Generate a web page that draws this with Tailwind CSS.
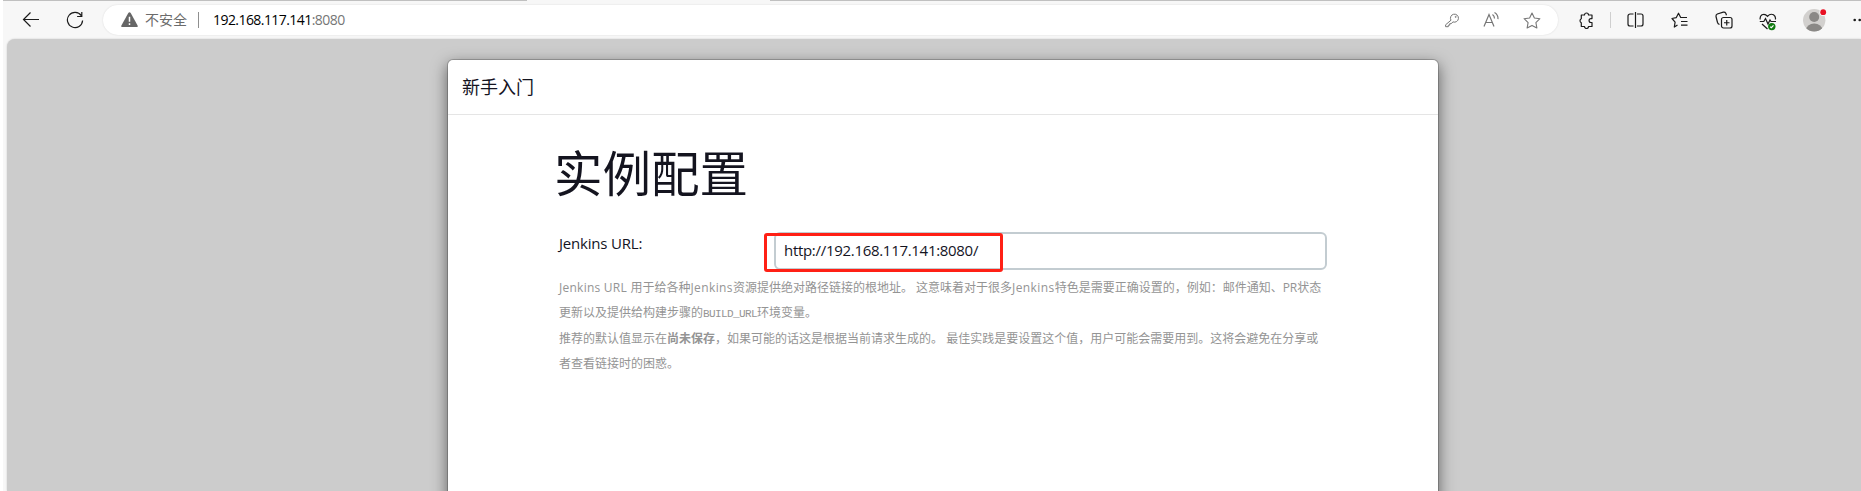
<!DOCTYPE html>
<html lang="zh-CN">
<head>
<meta charset="utf-8">
<title>Jenkins</title>
<script src="https://cdn.jsdelivr.net/npm/@tailwindcss/browser@4"></script>
</head>
<body class="w-[1861px] h-[491px] overflow-hidden bg-white font-['Open_Sans','Noto_Sans_CJK_SC',sans-serif] text-[#14141f]">
<div class="ml-[3px] h-[491px] flex flex-col bg-[#f7f7f7] overflow-hidden">
  <div class="h-px shrink-0 flex"><i class="w-[524px] bg-[#c0c0c0]"></i><i class="w-[243px]"></i><i class="flex-1 bg-[#c0c0c0]"></i></div>
  <header class="h-[38px] shrink-0 flex items-start pt-1 relative">
    <svg class="ml-[19px] mt-[6px] w-[18px] h-[18px] shrink-0" viewBox="0 0 18 18" fill="none" stroke="#1b1b1b" stroke-width="1.2"><path d="M17 8.5H1.5M8.5 1.5l-7 7 7 7"/></svg>
    <svg class="ml-[26px] mt-[6px] w-[18px] h-[18px] shrink-0" viewBox="0 0 18 18" fill="none" stroke="#1b1b1b" stroke-width="1.2"><path d="M15.3 4.7A7.6 7.6 0 1 0 16.6 9.5M15.8 1v4.500h-4.700"/></svg>
    <div class="ml-[19px] w-[1455px] h-[30px] shrink-0 rounded-full bg-white shadow-[0_0_2px_rgba(0,0,0,0.12)] flex items-center">
      <svg class="ml-[18px] w-[17px] h-[16px] shrink-0" viewBox="0 0 17 16"><path d="M7.300.9 0.400 13.400Q-.2 15 1.400 15.100h14.200q1.600-.1 1-1.700L9.700.9Q8.500-.5 7.300.9Z" fill="#666"/><path d="M8.500 4.800v5M8.500 11.300v1.700" stroke="#fff" stroke-width="1.500"/></svg>
      <span class="ml-[7px] w-[43px] text-[14px] leading-none whitespace-nowrap text-[#6b6b6b]">不安全</span>
      <i class="ml-[10px] w-px h-4 bg-[#8f8f8f]"></i>
      <span class="ml-[14px] text-[14px] tracking-[-0.56px] leading-none whitespace-nowrap text-[#767676]"><span class="text-black">192.168.117.141</span>:8080</span>
      <div class="ml-auto mr-[17px] flex items-center gap-[23px] text-[#767676]">
        <svg class="w-4 h-4" viewBox="0 0 16 16" fill="none" stroke="currentColor" stroke-width="1"><path d="M7 8.200 1.600 12.800v1.900h2.700v-1.500h1.400v-1.500h1.400L9 9.900a4 4 0 1 0-2-1.700Z"/><circle cx="11.700" cy="4.900" r=".5"/></svg>
        <svg class="w-[17px] h-4" viewBox="0 0 17 16" fill="none" stroke="currentColor" stroke-width="1.200"><path d="M1 14.500 6 2.500l5 12M2.800 10.500h6.500M9.500 2.400q2 1.500 2 4M11.500.6q3.700 2.100 3.500 6.500"/></svg>
        <svg class="w-[18px] h-[17px]" viewBox="0 0 18 17" fill="none" stroke="currentColor" stroke-width="1.100" stroke-linejoin="round"><path d="m9 1 2.400 5 5.500.7-4 3.900 1 5.400L9 13.400 4.100 16l1-5.400-4-3.900 5.500-.7Z"/></svg>
      </div>
    </div>
    <div class="flex items-center h-[30px] shrink-0 text-[#1b1b1b]">
      <svg class="ml-[20px] w-[17px] h-[17px]" viewBox="0 0 17 17" fill="none" stroke="currentColor" stroke-width="1.200" stroke-linejoin="round"><path d="M3.300 3h3.200a2 2 0 0 1 4 0H14v3.600h-1a1.900 1.900 0 0 0 0 3.900h1v4h-3.500a2 2 0 0 1-4 0H3.300v-3.700a2.200 2.200 0 0 1 0-4Z"/></svg>
      <i class="ml-[15px] w-px h-4 bg-[#cfcfcf]"></i>
      <svg class="ml-[16px] w-[17px] h-[16px]" viewBox="0 0 17 16" fill="none" stroke="currentColor" stroke-width="1.200"><path d="M6.500 2H3a2 2 0 0 0-2 2v8a2 2 0 0 0 2 2h3.500M10 2h4a2 2 0 0 1 2 2v8a2 2 0 0 1-2 2h-4M8.500 0v16"/></svg>
      <svg class="ml-[27px] w-[17px] h-[17px]" viewBox="0 0 17 17" fill="none" stroke="currentColor" stroke-width="1.200" stroke-linejoin="round"><path d="M6.500 12.900 3.300 15l.8-4.800L1 6.500l4.200-.8L7.500 1.200l2.200 4.300H16M10 9.500h6.500M10 13.200h6.500"/></svg>
      <svg class="ml-[27px] w-[18px] h-[18px]" viewBox="0 0 18 18" fill="none" stroke="currentColor" stroke-width="1.200"><rect x="6.500" y="6.500" width="10.500" height="10.500" rx="2"/><path d="M11.750 9v5.500M9 11.750h5.500M4.500 13.500Q3 13 2.500 11.500L1 5.500Q.7 3.800 2.300 3l6-1.800q1.700-.4 2.500 1l.7 2"/></svg>
      <svg class="ml-[26px] mt-1 w-[18px] h-[18px]" viewBox="0 0 18 18" fill="none" stroke="currentColor" stroke-width="1.200"><path d="M1.200 6.500Q.6 3.500 3 1.800 6 .3 8.500 3.300 11.200.2 14.500 1.800q2.500 1.700 1.900 4.700M.8 8.500h4l1.700-3L9 11l2-4 1 1.500h5M3 11l5.500 5"/><circle cx="12.800" cy="13.600" r="3.700" fill="#107c10" stroke="none"/><path d="m11.200 13.700 1.200 1 2.100-2.300" stroke="#fff"/></svg>
      <svg class="ml-[26px] w-[24px] h-[24px]" viewBox="0 0 24 24"><defs><clipPath id="avatar"><circle cx="11.200" cy="12.300" r="11.200"/></clipPath></defs><g clip-path="url(#avatar)"><path d="M0 0h24v24H0Z" fill="#d2d0ce"/><circle cx="11.200" cy="9" r="5" fill="#8a8886"/><ellipse cx="11.200" cy="22" rx="8.200" ry="6.500" fill="#8a8886"/></g><circle cx="20.200" cy="4.200" r="3.800" fill="#f7f7f7"/><circle cx="20.200" cy="4.200" r="2.900" fill="#e81123"/></svg>
      <svg class="ml-[26px] w-[14px] h-[4px]" viewBox="0 0 14 4" fill="currentColor"><circle cx="1.700" cy="2" r="1.300"/><circle cx="6.700" cy="2" r="1.300"/><circle cx="11.700" cy="2" r="1.300"/></svg>
    </div>
  </header>
  <main class="ml-1 flex-1 rounded-tl-[8px] bg-[#ccc] overflow-hidden shadow-[0_0_2px_rgba(0,0,0,0.2)]">
    <section class="ml-[440px] mt-5 w-[992px] h-[520px] rounded-[6px] border border-black/20 bg-white bg-clip-padding shadow-[0_5px_15px_rgba(0,0,0,0.5)]">
      <div class="h-[55px] border-b border-[#e5e5e5] pl-[14px] pt-[15px] text-[18px] leading-[25px]">新手入门</div>
      <div class="pl-[106px]">
        <h1 class="pt-[29px] h-[117px] text-[48.500px] leading-[58px]">实例配置</h1>
        <div class="flex h-[38px]">
          <label class="ml-[5px] w-[215px] text-[15px] leading-[22px] tracking-[-0.2px] whitespace-nowrap">Jenkins URL:</label>
          <div class="relative w-[553px] h-[38px] rounded-[6px] border-2 border-[#c3ccd1] pl-[8px] text-[15px] leading-[32px] whitespace-nowrap"><span class="tracking-[-0.3px]">http://192.168.117.141:8080/</span>
            <div class="absolute left-[-12px] top-[-1px] w-[239px] h-[39px] rounded-[3px] border-3 border-[#ff2015]"></div>
          </div>
        </div>
        <div class="ml-[5px] mt-[5px] text-[12px] leading-[25.400px] text-[#949494] whitespace-nowrap">
          <p><span class="tracking-[0.25px]">Jenkins URL </span>用于给各种<span class="tracking-[0.4px]">Jenkins</span>资源提供绝对路径链接的根地址。 这意味着对于很多<span class="tracking-[0.4px]">Jenkins</span>特色是需要正确设置的，例如：邮件通知、PR状态</p>
          <p>更新以及提供给构建步骤的<code class="inline-block w-[54px] font-['Liberation_Mono',monospace] text-[11px] tracking-[-0.6px] leading-none">BUILD_URL</code>环境变量。</p>
          <p>推荐的默认值显示在<b>尚未保存</b>，如果可能的话这是根据当前请求生成的。 最佳实践是要设置这个值，用户可能会需要用到。这将会避免在分享或</p>
          <p>者查看链接时的困惑。</p>
        </div>
      </div>
    </section>
  </main>
</div>
</body>
</html>
